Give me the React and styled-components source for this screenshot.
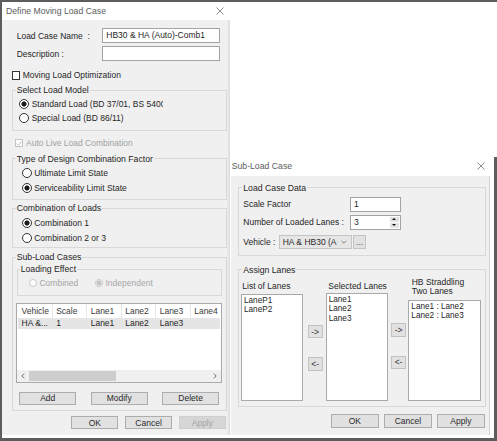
import styled, { createGlobalStyle } from 'styled-components'

const columns = [
    { name: 'Vehicle', w: 34.7 },
    { name: 'Scale', w: 34.5 },
    { name: 'Lane1', w: 34.5 },
    { name: 'Lane2', w: 34.5 },
    { name: 'Lane3', w: 34.5 },
    { name: 'Lane4', w: 34.5 },
]
const rowCells = ['HA &...', '1', 'Lane1', 'Lane2', 'Lane3', '']

const CloseIcon = () => (
    <svg width="8" height="8" viewBox="0 0 8 8">
        <path d="M0.5 0.5L7.5 7.5M7.5 0.5L0.5 7.5" stroke="#6e6e6e" strokeWidth="0.8" fill="none" />
    </svg>
)

const Check = () => (
    <svg width="7" height="7" viewBox="0 0 7 7">
        <path d="M1 3.6L2.8 5.4L6 1.4" stroke="#b4b4b4" strokeWidth="1" fill="none" />
    </svg>
)

const Chevron = ({ dir }) => (
    <svg width="4" height="6" viewBox="0 0 4 6">
        <path d={dir === 'left' ? 'M3.2 0.6L0.8 3L3.2 5.4' : 'M0.8 0.6L3.2 3L0.8 5.4'} stroke="#606060" strokeWidth="0.9" fill="none" />
    </svg>
)

const Radio = ({ checked, disabled, children, clip }) => (
    <RadioRow $disabled={disabled}>
        <RadioDot $checked={checked} $disabled={disabled} />
        <RadioText $clip={clip}>{children}</RadioText>
    </RadioRow>
)

export default function App() {
    return (
        <>
            <GlobalStyle />
            <Frame>
                <MainWindow>
                    <TitleBar>
                        <Title>Define Moving Load Case</Title>
                        <CloseIcon />
                    </TitleBar>
                    <MainBody>
                        <FieldRow>
                            <FieldLabel>Load Case Name&nbsp; :</FieldLabel>
                            <TextBox $w={118}>HB30 &amp; HA (Auto)-Comb1</TextBox>
                        </FieldRow>
                        <FieldRow $mt={3}>
                            <FieldLabel>Description :</FieldLabel>
                            <TextBox $w={118} />
                        </FieldRow>
                        <CheckRow $mt={9.5} $pl={0}>
                            <CheckBox />
                            <span>Moving Load Optimization</span>
                        </CheckRow>

                        <Group $mt={5.5}>
                            <Legend>Select Load Model</Legend>
                            <GroupInner $pad="2px 0 5px 6.5px">
                                <Radio checked clip>Standard Load (BD 37/01, BS 5400)</Radio>
                                <Radio>Special Load (BD 86/11)</Radio>
                            </GroupInner>
                        </Group>

                        <CheckRow $mt={7.3} $pl={3.3} $disabled>
                            <CheckBox $disabled><Check /></CheckBox>
                            <span>Auto Live Load Combination</span>
                        </CheckRow>

                        <Group $mt={6.3}>
                            <Legend>Type of Design Combination Factor</Legend>
                            <GroupInner $pad="1px 0 3px 9px" $row={15.5}>
                                <Radio>Ultimate Limit State</Radio>
                                <Radio checked>Serviceability Limit State</Radio>
                            </GroupInner>
                        </Group>

                        <Group $mt={3.4}>
                            <Legend>Combination of Loads</Legend>
                            <GroupInner $pad="1.8px 0 2.2px 9px" $row={15}>
                                <Radio checked>Combination 1</Radio>
                                <Radio>Combination 2 or 3</Radio>
                            </GroupInner>
                        </Group>

                        <Group $mt={4}>
                            <Legend>Sub-Load Cases</Legend>
                            <GroupInner $pad="2px 4px 4.7px 4px">
                                <Group>
                                    <Legend $ml={2}>Loading Effect</Legend>
                                    <EffectRow>
                                        <EffectItem $w={66}><Radio disabled>Combined</Radio></EffectItem>
                                        <EffectItem><Radio disabled checked>Independent</Radio></EffectItem>
                                    </EffectRow>
                                </Group>
                                <ListView>
                                    <LvHeader>
                                        {columns.map(c => (
                                            <LvCell key={c.name} $w={c.w} $head>{c.name}</LvCell>
                                        ))}
                                    </LvHeader>
                                    <LvRow>
                                        {rowCells.map((t, i) => (
                                            <LvCell key={i} $w={columns[i].w}>{t}</LvCell>
                                        ))}
                                    </LvRow>
                                    <LvFill />
                                    <HScroll>
                                        <ScrollArrow><Chevron dir="left" /></ScrollArrow>
                                        <ScrollThumb />
                                        <ScrollArrow $end><Chevron dir="right" /></ScrollArrow>
                                    </HScroll>
                                </ListView>
                                <ActionRow>
                                    <Button $w={56.7}>Add</Button>
                                    <Button $w={56.7}>Modify</Button>
                                    <Button $w={56.7}>Delete</Button>
                                </ActionRow>
                            </GroupInner>
                        </Group>

                        <DialogButtons $mt={5.3} $gap={6.5}>
                            <Button $w={47.3}>OK</Button>
                            <Button $w={47.3}>Cancel</Button>
                            <Button $w={47.3} $disabled>Apply</Button>
                        </DialogButtons>
                    </MainBody>
                </MainWindow>

                <RightSide>
                    <SubRow>
                        <SubWindow>
                            <SubTitleBar>
                                <Title>Sub-Load Case</Title>
                                <CloseIcon />
                            </SubTitleBar>
                            <SubBody>
                                <Group>
                                    <Legend $ml={3.6}>Load Case Data</Legend>
                                    <GroupInner $pad="4px 0 5.7px 4.6px">
                                        <FieldRow $pl={0}>
                                            <FieldLabel $w={106.7}>Scale Factor</FieldLabel>
                                            <TextBox $w={51}>1</TextBox>
                                        </FieldRow>
                                        <FieldRow $pl={0} $mt={3.3}>
                                            <FieldLabel $w={106.7}>Number of Loaded Lanes :</FieldLabel>
                                            <SpinBox>
                                                <SpinText>3</SpinText>
                                                <Spinner>
                                                    <SpinButton><Tri $up /></SpinButton>
                                                    <SpinButton><Tri /></SpinButton>
                                                </Spinner>
                                            </SpinBox>
                                        </FieldRow>
                                        <FieldRow $pl={0} $mt={5} $h={14.3}>
                                            <FieldLabel $w={35.7}>Vehicle :</FieldLabel>
                                            <Combo>
                                                <span>HA &amp; HB30 (A</span>
                                                <svg width="6" height="4" viewBox="0 0 6 4">
                                                    <path d="M0.6 0.8L3 3.2L5.4 0.8" stroke="#6a6a6a" strokeWidth="0.8" fill="none" />
                                                </svg>
                                            </Combo>
                                            <DotsButton>...</DotsButton>
                                        </FieldRow>
                                    </GroupInner>
                                </Group>

                                <Group $mt={9}>
                                    <Legend $ml={3.6}>Assign Lanes</Legend>
                                    <AssignRow>
                                        <LaneColumn $w={62.3}>
                                            <LaneLabel $pl={1.3} $mb={3.1}>List of Lanes</LaneLabel>
                                            <ListBox $h={107.4} $pt={1.3}>
                                                <ListItem>LaneP1</ListItem>
                                                <ListItem>LaneP2</ListItem>
                                            </ListBox>
                                        </LaneColumn>
                                        <ArrowColumn $ml={4.4} $mr={3} $pt={46.9}>
                                            <SmallButton>-&gt;</SmallButton>
                                            <SmallButton $mt={19}>&lt;-</SmallButton>
                                        </ArrowColumn>
                                        <LaneColumn $w={62.7}>
                                            <LaneLabel $pl={2.6} $mb={2.5}>Selected Lanes</LaneLabel>
                                            <ListBox $h={108} $pt={1.3}>
                                                <ListItem>Lane1</ListItem>
                                                <ListItem>Lane2</ListItem>
                                                <ListItem>Lane3</ListItem>
                                            </ListBox>
                                        </LaneColumn>
                                        <ArrowColumn $ml={2.7} $mr={2.3} $pt={45.2}>
                                            <SmallButton>-&gt;</SmallButton>
                                            <SmallButton $mt={19.3}>&lt;-</SmallButton>
                                        </ArrowColumn>
                                        <LaneColumn $w={72.3}>
                                            <LaneLabel $pl={3.4} $mb={3.8} $lh={9.2}>HB Straddling<br />Two Lanes</LaneLabel>
                                            <ListBox $h={100.7} $pt={0.5}>
                                                <ListItem>Lane1 : Lane2</ListItem>
                                                <ListItem>Lane2 : Lane3</ListItem>
                                            </ListBox>
                                        </LaneColumn>
                                    </AssignRow>
                                </Group>

                                <DialogButtons $mt={7.3} $gap={4.7}>
                                    <Button $w={48.3}>OK</Button>
                                    <Button $w={48.3}>Cancel</Button>
                                    <Button $w={48.3}>Apply</Button>
                                </DialogButtons>
                            </SubBody>
                        </SubWindow>
                        <EdgeBar />
                    </SubRow>
                </RightSide>
            </Frame>
        </>
    )
}

const GlobalStyle = createGlobalStyle`
    html, body {
        margin: 0;
        padding: 0;
        background: #fff;
    }
    body {
        font-family: "Liberation Sans", Arial, sans-serif;
        font-size: 8.5px;
        color: #262626;
    }
    * {
        box-sizing: border-box;
    }
`

const Frame = styled.div`
    width: 497px;
    height: 441px;
    border-top: 2px solid #5d5d5d;
    border-left: 2px solid #5d5d5d;
    border-bottom: 3px solid #5d5d5d;
    background: #fff;
    display: flex;
    align-items: flex-start;
    overflow: hidden;
`

const MainWindow = styled.div`
    width: 228px;
    height: 433px;
    display: flex;
    flex-direction: column;
    flex-shrink: 0;
`

const TitleBar = styled.div`
    height: 18px;
    display: flex;
    align-items: center;
    justify-content: space-between;
    padding: 0 6px 0 4px;
    background: #fff;
`

const Title = styled.span`
    color: #5c5c5c;
    font-size: 8.7px;
`

const MainBody = styled.div`
    flex: 1;
    background: #f0f0f0;
    padding: 8.3px 3.3px 0 9.7px;
    display: flex;
    flex-direction: column;
    box-shadow: inset -3px 0 3px -2px rgba(0, 0, 0, 0.12);
`

const FieldRow = styled.div`
    display: flex;
    align-items: center;
    height: ${p => p.$h || 15}px;
    margin-top: ${p => p.$mt || 0}px;
    padding-left: ${p => (p.$pl ?? 5)}px;
    flex-shrink: 0;
`

const FieldLabel = styled.span`
    width: ${p => p.$w || 85.6}px;
    flex-shrink: 0;
    white-space: nowrap;
`

const TextBox = styled.div`
    width: ${p => p.$w}px;
    height: 15px;
    border: 1px solid #a3a3a3;
    background: #fff;
    padding: 0 3px;
    line-height: 13px;
    white-space: nowrap;
    overflow: hidden;
`

const CheckRow = styled.div`
    display: flex;
    align-items: center;
    gap: 2.5px;
    height: 9px;
    margin-top: ${p => p.$mt}px;
    padding-left: ${p => p.$pl}px;
    color: ${p => (p.$disabled ? '#a2a2a2' : 'inherit')};
    flex-shrink: 0;
`

const CheckBox = styled.span`
    width: 8.5px;
    height: 8.5px;
    border: 1px solid ${p => (p.$disabled ? '#c4c4c4' : '#333')};
    background: #fff;
    display: flex;
    align-items: center;
    justify-content: center;
    flex-shrink: 0;
`

const Group = styled.fieldset`
    margin: ${p => p.$mt || 0}px 0 0;
    padding: 0;
    border: 1px solid #d8d8d8;
    min-width: 0;
    flex-shrink: 0;
`

const Legend = styled.legend`
    margin-left: ${p => p.$ml ?? 3}px;
    padding: 0 1px;
    height: 10px;
    line-height: 10px;
    font-size: 8.7px;
`

const GroupInner = styled.div`
    --row: ${p => p.$row || 14}px;
    padding: ${p => p.$pad};
    display: flex;
    flex-direction: column;
`

const RadioRow = styled.div`
    display: flex;
    align-items: center;
    gap: 2.5px;
    height: var(--row, 14px);
    flex-shrink: 0;
    color: ${p => (p.$disabled ? '#a6a6a6' : 'inherit')};
`

const RadioDot = styled.span`
    width: ${p => (p.$disabled ? 8 : 10)}px;
    height: ${p => (p.$disabled ? 8 : 10)}px;
    border-radius: 50%;
    border: 1px solid ${p => (p.$disabled ? '#c8c8c8' : '#333')};
    flex-shrink: 0;
    background: ${p => p.$checked
        ? `radial-gradient(circle, ${p.$disabled ? '#c4c4c4' : '#1c1c1c'} 0 2.3px, #fff 2.8px)`
        : '#fff'};
`

const RadioText = styled.span`
    white-space: nowrap;
    overflow: hidden;
    max-width: ${p => (p.$clip ? '131px' : 'none')};
`

const EffectRow = styled.div`
    --row: 14px;
    display: flex;
    padding: 2px 0 4.3px 11.3px;
`

const EffectItem = styled.div`
    width: ${p => (p.$w ? `${p.$w}px` : 'auto')};
`

const ListView = styled.div`
    margin: 7.7px 0 0 -0.7px;
    height: 80px;
    border: 1px solid #a9a9a9;
    background: #fff;
    display: flex;
    flex-direction: column;
    padding: 0 1px;
    overflow: hidden;
    flex-shrink: 0;
`

const LvHeader = styled.div`
    display: flex;
    height: 13.5px;
    flex-shrink: 0;
`

const LvRow = styled.div`
    display: flex;
    height: 11px;
    background: #e5e5e5;
    flex-shrink: 0;
`

const LvCell = styled.span`
    width: ${p => p.$w}px;
    flex-shrink: 0;
    padding-left: 3.5px;
    display: flex;
    align-items: center;
    white-space: nowrap;
    border-right: ${p => (p.$head ? '1px solid #e6e6e6' : 'none')};
    color: ${p => (p.$head ? '#3a3a3a' : 'inherit')};
`

const LvFill = styled.div`
    flex: 1;
`

const HScroll = styled.div`
    height: 12.5px;
    margin: 0 -1px;
    background: #f0f0f0;
    display: flex;
    align-items: center;
    flex-shrink: 0;
`

const ScrollArrow = styled.span`
    width: 12px;
    display: flex;
    justify-content: center;
    margin-left: ${p => (p.$end ? 'auto' : '0')};
`

const ScrollThumb = styled.span`
    width: 87.4px;
    height: 10px;
    background: #cdcdcd;
`

const ActionRow = styled.div`
    margin-top: 8.3px;
    height: 13.3px;
    display: flex;
    justify-content: space-between;
    padding: 0 2.7px;
    flex-shrink: 0;
`

const Button = styled.div`
    width: ${p => p.$w}px;
    height: 13.4px;
    background: ${p => (p.$disabled ? '#d6d6d6' : '#e1e1e1')};
    border: 1px solid ${p => (p.$disabled ? '#cfcfcf' : '#adadad')};
    color: ${p => (p.$disabled ? '#a3a3a3' : '#2a2a2a')};
    display: flex;
    align-items: center;
    justify-content: center;
    flex-shrink: 0;
`

const DialogButtons = styled.div`
    margin-top: ${p => p.$mt}px;
    display: flex;
    justify-content: flex-end;
    gap: ${p => p.$gap}px;
    padding-right: 0.7px;
    flex-shrink: 0;
`

const RightSide = styled.div`
    flex: 1;
    height: 100%;
    display: flex;
    flex-direction: column;
    padding-top: 155px;
`

const SubRow = styled.div`
    flex: 1;
    display: flex;
    padding-left: 1px;
`

const SubWindow = styled.div`
    width: 259px;
    height: 278px;
    display: flex;
    flex-direction: column;
`

const SubTitleBar = styled.div`
    height: 18.5px;
    display: flex;
    align-items: center;
    justify-content: space-between;
    padding: 0 5px 0 0.7px;
    background: #fff;
`

const SubBody = styled.div`
    flex: 1;
    background: #f0f0f0;
    padding: 7.2px 3.3px 0 6.7px;
    display: flex;
    flex-direction: column;
    border-right: 1px solid #d2d2d2;
`

const SpinBox = styled.div`
    width: 51px;
    height: 15px;
    border: 1px solid #a3a3a3;
    background: #fff;
    display: flex;
`

const SpinText = styled.span`
    flex: 1;
    padding-left: 3px;
    line-height: 13px;
`

const Spinner = styled.div`
    width: 11px;
    display: flex;
    flex-direction: column;
    gap: 1px;
    padding: 1px;
`

const SpinButton = styled.span`
    flex: 1;
    background: #e3e3e3;
    display: flex;
    align-items: center;
    justify-content: center;
`

const Tri = styled.span`
    width: 0;
    height: 0;
    border-left: 2.5px solid transparent;
    border-right: 2.5px solid transparent;
    ${p => (p.$up ? 'border-bottom: 2.5px solid #111;' : 'border-top: 2.5px solid #111;')}
`

const Combo = styled.div`
    width: 72.7px;
    height: 14.3px;
    background: #e6e6e6;
    border: 1px solid #c4c4c4;
    display: flex;
    align-items: center;
    justify-content: space-between;
    padding: 0 4px 0 2.7px;
    white-space: nowrap;
    color: #2a2a2a;
`

const DotsButton = styled.div`
    width: 12.7px;
    height: 13.3px;
    margin-left: 1.6px;
    background: #e1e1e1;
    border: 1px solid #c4c4c4;
    display: flex;
    align-items: flex-end;
    justify-content: center;
    padding-bottom: 2px;
    line-height: 8px;
    color: #555;
`

const AssignRow = styled.div`
    display: flex;
    align-items: flex-end;
    padding: 3.1px 6px 5px 2.3px;
`

const LaneColumn = styled.div`
    width: ${p => p.$w}px;
    flex-shrink: 0;
    display: flex;
    flex-direction: column;
`

const LaneLabel = styled.div`
    padding-left: ${p => p.$pl}px;
    margin-bottom: ${p => p.$mb}px;
    line-height: ${p => p.$lh || 8.4}px;
    white-space: nowrap;
`

const ListBox = styled.div`
    height: ${p => p.$h}px;
    border: 1px solid #a9a9a9;
    background: #fff;
    padding: ${p => p.$pt}px 2px 0 2px;
    font-size: 8.2px;
    line-height: 9.2px;
`

const ListItem = styled.div`
    white-space: nowrap;
`

const ArrowColumn = styled.div`
    align-self: flex-start;
    width: 15px;
    flex-shrink: 0;
    margin: 0 ${p => p.$mr}px 0 ${p => p.$ml}px;
    padding-top: ${p => p.$pt}px;
    display: flex;
    flex-direction: column;
`

const SmallButton = styled.div`
    height: 13.3px;
    margin-top: ${p => p.$mt || 0}px;
    background: #e1e1e1;
    border: 1px solid #c2c2c2;
    display: flex;
    align-items: center;
    justify-content: center;
    color: #333;
`

const EdgeBar = styled.div`
    width: 3px;
    margin-left: auto;
    background: #5d5d5d;
`
